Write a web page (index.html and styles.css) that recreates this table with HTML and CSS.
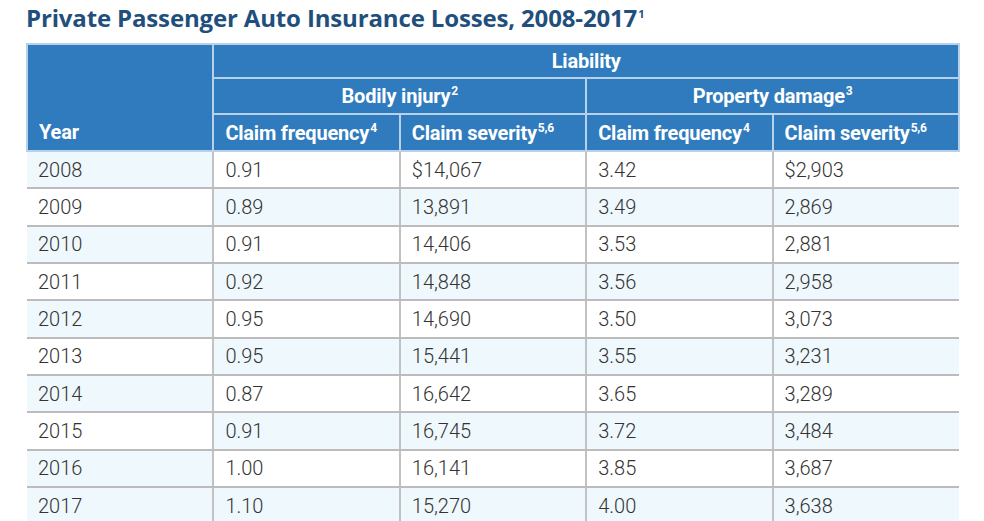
FILE: index.html
```html
<!DOCTYPE html>
<html lang="en">
<head>
<meta charset="utf-8">
<title>Private Passenger Auto Insurance Losses</title>
<link rel="stylesheet" href="styles.css">
</head>
<body>
<div class="page">
  <h1 class="title">Private Passenger Auto Insurance Losses, 2008-2017<sup>1</sup></h1>
  <table class="data">
    <colgroup>
      <col class="c"><col class="c"><col class="c"><col class="c"><col class="c">
    </colgroup>
    <thead>
      <tr class="h1">
        <th rowspan="3" class="year-head">Year</th>
        <th colspan="4" class="center">Liability</th>
      </tr>
      <tr class="h2">
        <th colspan="2" class="center">Bodily injury<sup>2</sup></th>
        <th colspan="2" class="center">Property damage<sup>3</sup></th>
      </tr>
      <tr class="h3">
        <th>Claim frequency<sup>4</sup></th>
        <th>Claim severity<sup>5,6</sup></th>
        <th>Claim frequency<sup>4</sup></th>
        <th>Claim severity<sup>5,6</sup></th>
      </tr>
    </thead>
    <tbody>
      <tr class="odd"><td class="yr tint">2008</td><td>0.91</td><td>$14,067</td><td>3.42</td><td>$2,903</td></tr>
      <tr class="even"><td class="yr">2009</td><td>0.89</td><td>13,891</td><td>3.49</td><td>2,869</td></tr>
      <tr class="odd"><td class="yr tint">2010</td><td>0.91</td><td>14,406</td><td>3.53</td><td>2,881</td></tr>
      <tr class="even"><td class="yr">2011</td><td>0.92</td><td>14,848</td><td>3.56</td><td>2,958</td></tr>
      <tr class="odd"><td class="yr tint">2012</td><td>0.95</td><td>14,690</td><td>3.50</td><td>3,073</td></tr>
      <tr class="even"><td class="yr">2013</td><td>0.95</td><td>15,441</td><td>3.55</td><td>3,231</td></tr>
      <tr class="odd"><td class="yr tint">2014</td><td>0.87</td><td>16,642</td><td>3.65</td><td>3,289</td></tr>
      <tr class="even"><td class="yr">2015</td><td>0.91</td><td>16,745</td><td>3.72</td><td>3,484</td></tr>
      <tr class="odd"><td class="yr tint">2016</td><td>1.00</td><td>16,141</td><td>3.85</td><td>3,687</td></tr>
      <tr class="even"><td class="yr tint">2017</td><td>1.10</td><td>15,270</td><td>4.00</td><td>3,638</td></tr>
    </tbody>
  </table>
</div>
</body>
</html>
```

FILE: styles.css
```css
html, body {
  margin: 0;
  padding: 0;
  background: #ffffff;
}
.page {
  padding: 2px 24px 0 26px;
}
.title {
  margin: 0 0 4px 0;
  font-family: "Open Sans", "Liberation Sans", sans-serif;
  font-weight: 700;
  font-size: 24px;
  line-height: 32px;
  color: #1f4f7d;
  letter-spacing: -0.15px;
}
.title sup {
  font-size: 11px;
  vertical-align: 0;
  position: relative;
  top: -9px;
  margin-left: 1px;
}
.data {
  width: 934px;
  border-collapse: collapse;
  table-layout: fixed;
  font-family: Roboto, "Liberation Sans", sans-serif;
}
.data col.c {
  width: 20%;
}
.data th {
  background: #2f7bbd;
  color: #ffffff;
  font-weight: 700;
  font-size: 20px;
  text-align: left;
  padding: 0 0 0 11px;
  border: 2px solid #b7d1ea;
  letter-spacing: -0.2px;
  vertical-align: middle;
}
.data th.center {
  text-align: center;
  padding: 0;
}
.data th.year-head {
  vertical-align: bottom;
  padding-bottom: 6px;
}
.data th sup {
  font-size: 12px;
  vertical-align: 0;
  position: relative;
  top: -8px;
  margin-left: 1px;
}
.data tr.h1 th {
  height: 32px;
}
.data tr.h2 th {
  height: 34px;
}
.data tr.h3 th {
  height: 35px;
}
.data td {
  height: 35.35px;
  padding: 0 0 0 11px;
  font-size: 20px;
  font-weight: 300;
  color: #333333;
  border-top: 2px solid #bcbcbc;
  border-bottom: 2px solid #bcbcbc;
  border-left: 2px solid #c2c2c2;
  border-right: 2px solid #c2c2c2;
  background: #ffffff;
}
.data tbody tr:first-child td {
  border-top: none;
}
.data td:first-child {
  border-left: none;
}
.data td:last-child {
  border-right: none;
}
.data tr.even td {
  background: #eff8fc;
}
.data tr.odd td.yr.tint {
  background: #eff8fc;
}
.data tr.even td.yr {
  background: #ffffff;
}
.data tr.even td.yr.tint {
  background: #eff8fc;
}
```
